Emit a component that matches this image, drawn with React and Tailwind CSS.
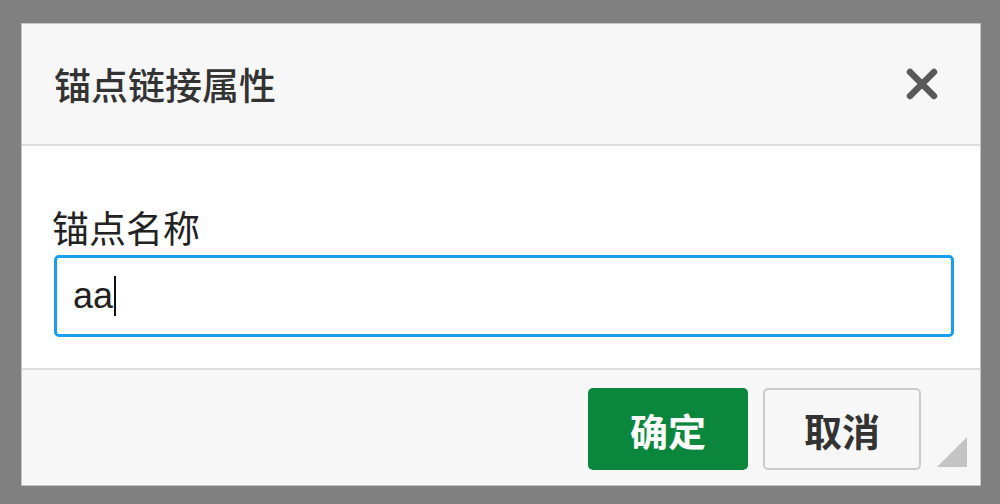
export default function App() {
  const cjk = { fontFamily: '"Noto Sans CJK SC", "Liberation Sans", sans-serif' };

  return (
    <div className="w-[1000px] h-[504px] bg-[#808080] pt-[23px] pl-[21px]">
      <div className="relative w-[960px] h-[463px] bg-white border border-[#c4c4c4] flex flex-col" style={cjk}>
        {/* header */}
        <div className="h-[122px] shrink-0 bg-[#f7f7f7] border-b-2 border-[#dcdcdc] flex items-center justify-between pl-[32px] pr-[42px]">
          <span className="text-[37px] leading-none text-[#333] font-medium">锚点链接属性</span>
          <svg width="32" height="32" viewBox="0 0 32 32">
            <path d="M4 4 L28 28 M28 4 L4 28" stroke="#595959" strokeWidth="6.5" strokeLinecap="round" />
          </svg>
        </div>

        {/* body */}
        <div className="h-[224px] shrink-0 border-b-2 border-[#dcdcdc] pt-[57px] px-[32px]">
          <div className="text-[37px] leading-[48px] text-[#222] -ml-[2px]">锚点名称</div>
          <div className="mt-[4px] w-[900px] h-[82px] border-[3px] border-[#1a9df0] rounded-[5px] flex items-center pl-[16px]">
            <span className="text-[36px] leading-none text-[#222]" style={{ fontFamily: '"Liberation Sans", Arial, sans-serif' }}>aa</span>
            <span className="w-[2px] h-[40px] bg-[#111] ml-[1px]" />
          </div>
        </div>

        {/* footer */}
        <div className="flex-1 bg-[#f7f7f7] flex items-center justify-end gap-[15px] pr-[59px] pt-[3px]">
          <button className="w-[160px] h-[82px] rounded-[5px] bg-[#0b873d] text-white text-[38px] font-bold">确定</button>
          <button className="w-[158px] h-[82px] rounded-[5px] border-2 border-[#cacaca] bg-[#f7f7f7] text-[#333] text-[38px] font-bold">取消</button>
        </div>

        {/* resize grip */}
        <svg className="absolute right-[13px] bottom-[18px]" width="30" height="30" viewBox="0 0 30 30">
          <path d="M30 0 L30 30 L0 30 Z" fill="#c4c4c4" />
        </svg>
      </div>
    </div>
  );
}
